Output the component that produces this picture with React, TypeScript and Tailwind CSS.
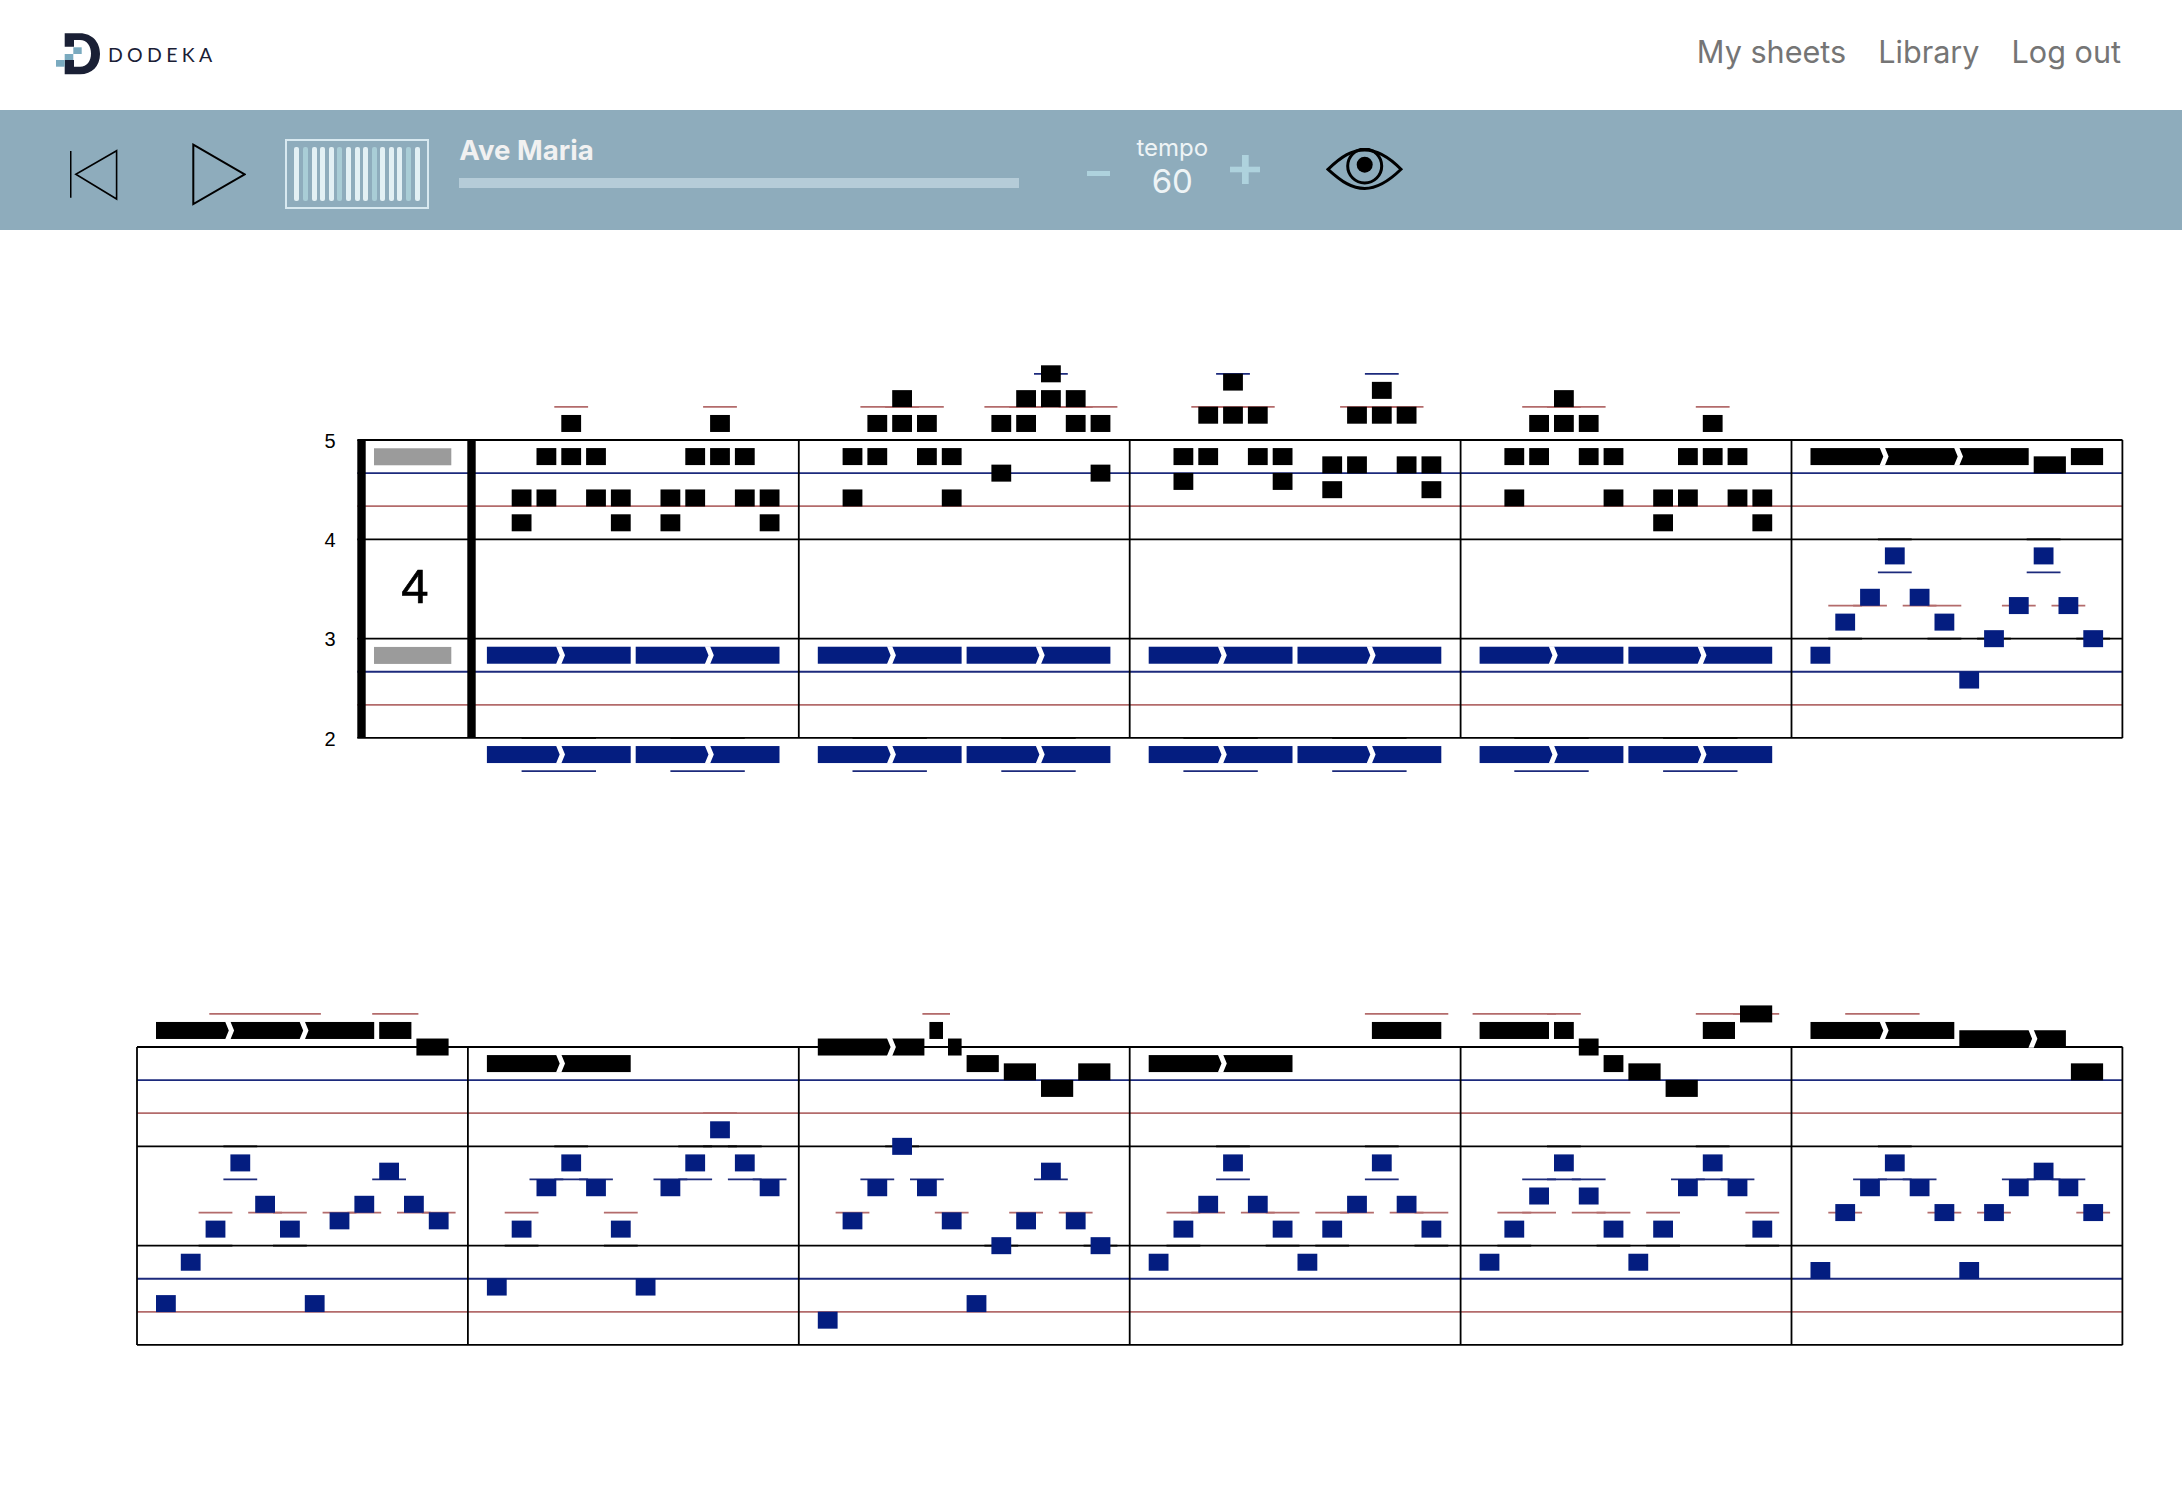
import React from 'react';

// score geometry, all in screen px
const BAR_X = 137;
const BAR_W = 330.9;
const FIRST_SLOT = 19;
const SLOT = 24.8;
const ROW = 8.277;
const NOTE_H = 17;
const RIGHT = 2122.5;
const TOP_PAD = 80;

const INK = '#000000';
const BLUE = '#041d80';
const BLUE_LINE = '#1c2a7c';
const RED_LINE = '#b36b6b';

type Note = { m: number; s: number; k: number; len?: number; ties?: number[] };

// same pitch row, several one-slot notes
const row = (m: number, k: number, slots: number[]): Note[] => slots.map(s => ({ m, s, k }));

// two tied half-measure bars
const bars = (m: number, k: number): Note[] => [
  { m, s: 0, k, len: 6, ties: [3] },
  { m, s: 6, k, len: 6, ties: [3] },
];

const topBlack: Note[] = [
  ...row(1, -3, [3, 9]),
  ...row(1, 1, [2, 3, 4, 8, 9, 10]),
  ...row(1, 6, [1, 2, 4, 5, 7, 8, 10, 11]),
  ...row(1, 9, [1, 5, 7, 11]),

  ...row(2, -9, [9]),
  ...row(2, -6, [3, 8, 9, 10]),
  ...row(2, -3, [2, 3, 4, 7, 8, 10, 11]),
  ...row(2, 1, [1, 2, 4, 5]),
  ...row(2, 3, [7, 11]),
  ...row(2, 6, [1, 5]),

  ...row(3, -8, [3]),
  ...row(3, -7, [9]),
  ...row(3, -4, [2, 3, 4, 8, 9, 10]),
  ...row(3, 1, [1, 2, 4, 5]),
  ...row(3, 2, [7, 8, 10, 11]),
  ...row(3, 4, [1, 5]),
  ...row(3, 5, [7, 11]),

  ...row(4, -6, [3]),
  ...row(4, -3, [2, 3, 4, 9]),
  ...row(4, 1, [1, 2, 4, 5, 8, 9, 10]),
  ...row(4, 6, [1, 5, 7, 8, 10, 11]),
  ...row(4, 9, [7, 11]),

  { m: 5, s: 0, k: 1, len: 9, ties: [3, 6] },
  { m: 5, s: 9, k: 2, len: 1.5 },
  { m: 5, s: 10.5, k: 1, len: 1.5 },
];

const topBlue: Note[] = [
  ...[1, 2, 3, 4].flatMap(m => [...bars(m, 25), ...bars(m, 37)]),
  ...row(5, 13, [3, 9]),
  ...row(5, 18, [2, 4]),
  ...row(5, 19, [8, 10]),
  ...row(5, 21, [1, 5]),
  ...row(5, 23, [7, 11]),
  ...row(5, 25, [0]),
  ...row(5, 28, [6]),
];

const bottomBlack: Note[] = [
  { m: 0, s: 0, k: -3, len: 9, ties: [3, 6] },
  { m: 0, s: 9, k: -3, len: 1.5 },
  { m: 0, s: 10.5, k: -1, len: 1.5 },

  { m: 1, s: 0, k: 1, len: 6, ties: [3] },

  { m: 2, s: 0, k: -1, len: 4.5, ties: [3] },
  { m: 2, s: 4.5, k: -3, len: 0.75 },
  { m: 2, s: 5.25, k: -1, len: 0.75 },
  { m: 2, s: 6, k: 1, len: 1.5 },
  { m: 2, s: 7.5, k: 2, len: 1.5 },
  { m: 2, s: 9, k: 4, len: 1.5 },
  { m: 2, s: 10.5, k: 2, len: 1.5 },

  { m: 3, s: 0, k: 1, len: 6, ties: [3] },
  { m: 3, s: 9, k: -3, len: 3 },

  { m: 4, s: 0, k: -3, len: 3 },
  { m: 4, s: 3, k: -3 },
  { m: 4, s: 4, k: -1 },
  { m: 4, s: 5, k: 1 },
  { m: 4, s: 6, k: 2, len: 1.5 },
  { m: 4, s: 7.5, k: 4, len: 1.5 },
  { m: 4, s: 9, k: -3, len: 1.5 },
  { m: 4, s: 10.5, k: -5, len: 1.5 },

  { m: 5, s: 0, k: -3, len: 6, ties: [3] },
  { m: 5, s: 6, k: -2, len: 4.5, ties: [3] },
  { m: 5, s: 10.5, k: 2, len: 1.5 },
];

const bottomBlue: Note[] = [
  ...row(0, 13, [3]),
  ...row(0, 14, [9]),
  ...row(0, 18, [4, 8, 10]),
  ...row(0, 20, [7, 11]),
  ...row(0, 21, [2, 5]),
  ...row(0, 25, [1]),
  ...row(0, 30, [0, 6]),

  ...row(1, 9, [9]),
  ...row(1, 13, [3, 8, 10]),
  ...row(1, 16, [2, 4, 7, 11]),
  ...row(1, 21, [1, 5]),
  ...row(1, 28, [0, 6]),

  ...row(2, 11, [3]),
  ...row(2, 14, [9]),
  ...row(2, 16, [2, 4]),
  ...row(2, 20, [1, 5, 8, 10]),
  ...row(2, 23, [7, 11]),
  ...row(2, 30, [6]),
  ...row(2, 32, [0]),

  ...row(3, 13, [3, 9]),
  ...row(3, 18, [2, 4, 8, 10]),
  ...row(3, 21, [1, 5, 7, 11]),
  ...row(3, 25, [0, 6]),

  ...row(4, 13, [3, 9]),
  ...row(4, 16, [8, 10]),
  ...row(4, 17, [2, 4]),
  ...row(4, 21, [1, 5, 7, 11]),
  ...row(4, 25, [0, 6]),

  ...row(5, 13, [3]),
  ...row(5, 14, [9]),
  ...row(5, 16, [2, 4, 8, 10]),
  ...row(5, 19, [1, 5, 7, 11]),
  ...row(5, 26, [0, 6]),
];

// notes inside their own part of the staff draw no ledger lines
const blackLedgered = (notes: Note[]) => notes.filter(n => n.k <= 0);
const blueLedgered = (notes: Note[]) => notes.filter(n => n.k < 24 || n.k >= 36);

const noteX = (n: Note) => BAR_X + n.m * BAR_W + FIRST_SLOT + n.s * SLOT;
const noteW = (n: Note) => (n.len ?? 1) * SLOT - 5;

// a note takes the lines it touches or sits between
const ledgerRows = (k: number) => {
  const rem = ((k % 4) + 4) % 4;
  if (rem === 0) return [k];
  if (rem === 1) return [k - 1, k + 3];
  if (rem === 2) return [k + 2];
  return [k + 1];
};

const ledgerColor = (k: number) => {
  const rem = ((k % 12) + 12) % 12;
  if (rem === 0) return INK;
  return rem === 4 ? BLUE_LINE : RED_LINE;
};

const Ledgers: React.FC<{ notes: Note[] }> = ({ notes }) => (
  <g strokeWidth={1.8}>
    {notes.flatMap((n, i) =>
      ledgerRows(n.k).map(l => {
        const w = n.ties ? (n.len ?? 1) * 12.4 : noteW(n) + 14;
        const cx = noteX(n) + noteW(n) / 2;
        const y = TOP_PAD + l * ROW;
        return <line key={`${i}-${l}`} x1={cx - w / 2} x2={cx + w / 2} y1={y} y2={y} stroke={ledgerColor(l)} />;
      }),
    )}
  </g>
);

const Notes: React.FC<{ notes: Note[]; color: string }> = ({ notes, color }) => (
  <g>
    {notes.map((n, i) => {
      const x = noteX(n);
      const y = TOP_PAD + n.k * ROW - 0.2;
      return (
        <g key={i}>
          <rect x={x} y={y} width={noteW(n)} height={NOTE_H} fill={color} />
          {(n.ties ?? []).map(t => {
            const e = x + t * SLOT - 5.3;
            const b = y + NOTE_H;
            const mid = y + NOTE_H / 2;
            return (
              <polygon
                key={t}
                fill="#ffffff"
                points={`${e},${y - 0.5} ${e + 3.7},${mid} ${e},${b + 0.5} ${e + 5.3},${b + 0.5} ${e + 9},${mid} ${e + 5.3},${y - 0.5}`}
              />
            );
          })}
        </g>
      );
    })}
  </g>
);

const StaffLines: React.FC<{ left: number }> = ({ left }) => {
  const lines: [number, string][] = [
    [0, INK], [4, BLUE_LINE], [8, RED_LINE], [12, INK],
    [24, INK], [28, BLUE_LINE], [32, RED_LINE], [36, INK],
  ];
  return (
    <g strokeWidth={1.8}>
      {lines.map(([k, c]) => (
        <line key={k} x1={left} x2={RIGHT} y1={TOP_PAD + k * ROW} y2={TOP_PAD + k * ROW} stroke={c} />
      ))}
    </g>
  );
};

const Barlines: React.FC<{ from: number }> = ({ from }) => (
  <g stroke={INK} strokeWidth={1.8}>
    {[0, 1, 2, 3, 4, 5, 6].filter(m => m >= from).map(m => {
      const x = BAR_X + m * BAR_W;
      return <line key={m} x1={x} x2={x} y1={TOP_PAD} y2={TOP_PAD + 36 * ROW} />;
    })}
  </g>
);

const TopStaff = () => (
  <svg width={2182} height={428} viewBox="0 0 2182 428" className="block mt-[130px]">
    <StaffLines left={357.3} />
    <Barlines from={2} />
    <Ledgers notes={blackLedgered(topBlack)} />
    <Ledgers notes={blueLedgered(topBlue)} />
    <rect x={357.3} y={TOP_PAD} width={8.4} height={298} fill={INK} />
    <rect x={467.3} y={TOP_PAD} width={8.4} height={298} fill={INK} />
    <rect x={374} y={TOP_PAD + ROW} width={77.3} height={NOTE_H} fill="#9b9b9b" />
    <rect x={374} y={TOP_PAD + 25 * ROW} width={77.3} height={NOTE_H} fill="#9b9b9b" />
    <g className="font-['Liberation_Sans',sans-serif]" fill="#000000">
      {['5', '4', '3', '2'].map((t, i) => (
        <text key={t} x={330} y={TOP_PAD + 7.7 + i * 99.33} textAnchor="middle" fontSize={20}>
          {t}
        </text>
      ))}
      <text x={415} y={TOP_PAD + 162.7} textAnchor="middle" fontSize={49} stroke="#000000" strokeWidth={0.7}>
        4
      </text>
    </g>
    <Notes notes={topBlack} color={INK} />
    <Notes notes={topBlue} color={BLUE} />
  </svg>
);

const BottomStaff = () => (
  <svg width={2182} height={400} viewBox="0 0 2182 400" className="block mt-[178.67px]">
    <StaffLines left={BAR_X} />
    <Barlines from={0} />
    <Ledgers notes={blackLedgered(bottomBlack)} />
    <Ledgers notes={blueLedgered(bottomBlue)} />
    <Notes notes={bottomBlack} color={INK} />
    <Notes notes={bottomBlue} color={BLUE} />
  </svg>
);

const Logo = () => (
  <div className="flex items-start ml-[56px] mt-[33px]">
    <svg width={44} height={42} viewBox="56 33 44 42" className="block shrink-0">
      <path
        d="M64.7 33.3H80C92 33.3 100 42 100 54C100 66 92 74.3 80 74.3H64.7V60H74V66.7H80C87 66.7 91 61 91 53.5C91 46 87 40 80 40H74V46.7H64.7Z"
        fill="#1a2035"
      />
      <rect x={73.3} y={47.3} width={8.4} height={6.7} fill="#7aaabf" />
      <rect x={64.7} y={54} width={8.6} height={6} fill="#7aaabf" />
      <rect x={56} y={60} width={8.7} height={6.7} fill="#7aaabf" />
    </svg>
    <span className="ml-[8px] mt-[10px] text-[19.5px] leading-[24px] tracking-[0.22em] text-[#1a2035] font-['Lato',sans-serif]">
      DODEKA
    </span>
  </div>
);

const Nav = () => (
  <nav className="flex gap-[32px] mr-[61px] mt-[32px] text-[30.6px] leading-[40px] text-[#757575]">
    <a>My sheets</a>
    <a>Library</a>
    <a>Log out</a>
  </nav>
);

const barcodeTones = [0, 1, 0, 0, 0, 1, 0, 0, 0, 1, 0, 0, 0, 1, 0];

const Barcode = () => (
  <div className="flex justify-center items-center gap-[3.6px] w-[144px] h-[70px] ml-[39px] mt-[29px] border-2 border-[#d8e9f0] shrink-0">
    {barcodeTones.map((t, i) => (
      <div key={i} className={t ? 'w-[5px] h-[54.6px] rounded-[2px] bg-[#a9cdd6]' : 'w-[5px] h-[54.6px] rounded-[2px] bg-[#e2f0f4]'} />
    ))}
  </div>
);

const Toolbar = () => (
  <div className="flex items-start h-[120px] bg-[#8eacbc]">
    <svg width={48} height={52} viewBox="70 149 48 52" className="block ml-[70px] mt-[39px] shrink-0" fill="none" stroke="#000000" strokeWidth={1.6}>
      <line x1={70.7} x2={70.7} y1={151} y2={197.7} />
      <path d="M116.6 150.7L75.8 174.3L116.6 199Z" />
    </svg>
    <svg width={54} height={63} viewBox="192 143 54 63" className="block ml-[74px] mt-[33px] shrink-0" fill="none" stroke="#000000" strokeWidth={2}>
      <path d="M193.3 144.7L244.7 174.3L193.3 204Z" />
    </svg>
    <Barcode />
    <div className="w-[560px] ml-[30.3px] mt-[22px] shrink-0">
      <div className="text-[27.6px] leading-[36px] font-bold text-[#f1f1f1]">Ave Maria</div>
      <div className="h-[10px] mt-[10px] bg-[#b5ccd8]" />
    </div>
    <div className="w-[23.3px] h-[5px] ml-[67.7px] mt-[61px] bg-[#aed2dd] shrink-0" />
    <div className="flex flex-col items-center w-[90px] ml-[17px] mt-[23px] text-[#eef4f6] shrink-0">
      <div className="text-[24px] leading-[30px]">tempo</div>
      <div className="text-[33px] leading-[36px]">60</div>
    </div>
    <svg width={30} height={29} viewBox="0 0 30 29" className="block ml-[13px] mt-[45px] shrink-0" fill="#aed2dd">
      <rect x={12} y={0} width={6.7} height={29} />
      <rect x={0} y={11.7} width={30} height={5.6} />
    </svg>
    <svg width={80} height={44} viewBox="1325 148 80 44" className="block ml-[65px] mt-[38px] shrink-0" fill="none" stroke="#000000" strokeWidth={3}>
      <path d="M1328 169.3C1342 156 1352 150 1364.7 150C1377 150 1388 156 1401 169.3C1388 182 1377 188.5 1364.7 188.5C1352 188.5 1342 182 1328 169.3Z" />
      <circle cx={1364.7} cy={166} r={17} />
      <circle cx={1364.7} cy={164.7} r={8} fill="#000000" stroke="none" />
    </svg>
  </div>
);

export default function App() {
  return (
    <div className="w-[2182px] min-h-[1494px] bg-white font-['Inter',sans-serif]">
      <header className="flex items-start justify-between h-[110px]">
        <Logo />
        <Nav />
      </header>
      <Toolbar />
      <main>
        <TopStaff />
        <BottomStaff />
      </main>
    </div>
  );
}
